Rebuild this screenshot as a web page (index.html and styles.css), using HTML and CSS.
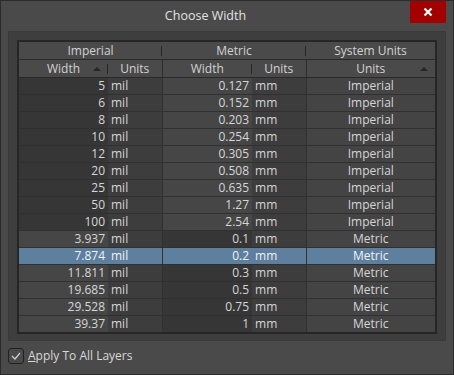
FILE: index.html
```html
<!DOCTYPE html>
<html lang="en">
<head>
    <meta charset="UTF-8">
    <title>Choose Width</title>
    <link rel="stylesheet" href="styles.css">
</head>
<body>
    <div class="window">
        <div class="titlebar">
            <div class="title">Choose Width</div>
            <div class="close">
                <svg width="10" height="10" viewBox="0 0 10 10"><path d="M1.5 1.5 L8.5 8.5 M8.5 1.5 L1.5 8.5" stroke="#fff" stroke-width="2.2"/></svg>
            </div>
        </div>

        <div class="panel">
            <table class="grid">
                <colgroup>
                    <col class="c-w"><col class="c-u"><col class="c-w"><col class="c-u"><col>
                </colgroup>
                <thead>
                    <tr class="band">
                        <th colspan="2"><span class="sep">Imperial</span></th>
                        <th colspan="2"><span class="sep">Metric</span></th>
                        <th>System Units</th>
                    </tr>
                    <tr class="cols">
                        <th class="sorted split">Width<i class="arrow"></i></th>
                        <th class="full">Units</th>
                        <th class="split">Width</th>
                        <th class="full">Units</th>
                        <th class="sorted">Units<i class="arrow"></i></th>
                    </tr>
                </thead>
                <tbody>
                    <tr class="imp"><td>5</td><td>mil</td><td>0.127</td><td>mm</td><td>Imperial</td></tr>
                    <tr class="imp"><td>6</td><td>mil</td><td>0.152</td><td>mm</td><td>Imperial</td></tr>
                    <tr class="imp"><td>8</td><td>mil</td><td>0.203</td><td>mm</td><td>Imperial</td></tr>
                    <tr class="imp"><td>10</td><td>mil</td><td>0.254</td><td>mm</td><td>Imperial</td></tr>
                    <tr class="imp"><td>12</td><td>mil</td><td>0.305</td><td>mm</td><td>Imperial</td></tr>
                    <tr class="imp"><td>20</td><td>mil</td><td>0.508</td><td>mm</td><td>Imperial</td></tr>
                    <tr class="imp"><td>25</td><td>mil</td><td>0.635</td><td>mm</td><td>Imperial</td></tr>
                    <tr class="imp"><td>50</td><td>mil</td><td>1.27</td><td>mm</td><td>Imperial</td></tr>
                    <tr class="imp"><td>100</td><td>mil</td><td>2.54</td><td>mm</td><td>Imperial</td></tr>
                    <tr class="met"><td>3.937</td><td>mil</td><td>0.1</td><td>mm</td><td>Metric</td></tr>
                    <tr class="met selected"><td>7.874</td><td>mil</td><td>0.2</td><td>mm</td><td>Metric</td></tr>
                    <tr class="met"><td>11.811</td><td>mil</td><td>0.3</td><td>mm</td><td>Metric</td></tr>
                    <tr class="met"><td>19.685</td><td>mil</td><td>0.5</td><td>mm</td><td>Metric</td></tr>
                    <tr class="met"><td>29.528</td><td>mil</td><td>0.75</td><td>mm</td><td>Metric</td></tr>
                    <tr class="met"><td>39.37</td><td>mil</td><td>1</td><td>mm</td><td>Metric</td></tr>
                </tbody>
            </table>
        </div>

        <label class="check">
            <span class="box">
                <svg width="10" height="8" viewBox="0 0 10 8"><path d="M1 4 L4 7 L9 1" fill="none" stroke="#cfcfcf" stroke-width="1.2"/></svg>
            </span>
            <span><u>A</u>pply To All Layers</span>
        </label>
    </div>
</body>
</html>
```

FILE: styles.css
```css
body {
    margin: 0;
    background: #2b2b2b;
    font-family: "Open Sans", "Noto Sans", sans-serif;
    font-size: 12px;
    color: #d6d6d6;
}
.window {
    width: 454px;
    height: 375px;
    box-sizing: border-box;
    border: 1px solid #2b2b2b;
    background: #4a4a4a;
}
.titlebar {
    display: flex;
    height: 30px;
}
.title {
    flex: 1;
    text-align: center;
    line-height: 30px;
    font-size: 12.5px;
    color: #e2e2e2;
}
.close {
    width: 36px;
    height: 22px;
    margin-right: 7px;
    background: #a30000;
    display: flex;
    align-items: center;
    justify-content: center;
}
.panel {
    margin: 0 7px;
    padding: 8px 9px 8px 8px;
    height: 292px;
    border: 1px solid #3a3a3a;
    background: #3e3e3e;
}
.grid {
    width: 420px;
    border-collapse: collapse;
    table-layout: fixed;
    border: 2px solid #262626;
}
.c-w { width: 90px; }
.c-u { width: 54px; }
th {
    font-weight: normal;
    height: 17px;
    padding: 0;
    background: #4a4a4a;
    color: #d2d2d2;
    position: relative;
}
.band th {
    border-bottom: 1px solid #2a2a2a;
}
.band th + th::before,
.cols th.split + th::before {
    content: "";
    position: absolute;
    left: -1px;
    top: 4px;
    height: 10px;
    width: 1px;
    background: #262626;
}
.cols th {
    border-bottom: 1px solid #2a2a2a;
}
.cols th.full + th {
    border-left: 1px solid #2e2e2e;
}
.cols th.full {
    border-left: none;
}
.arrow {
    position: absolute;
    right: 7px;
    top: 7px;
    width: 0;
    height: 0;
    border-left: 4px solid transparent;
    border-right: 4px solid transparent;
    border-bottom: 4px solid #262626;
}
td {
    height: 16px;
    padding: 0 3px;
    border-bottom: 1px solid #303030;
    white-space: nowrap;
    line-height: 16px;
}
td:nth-child(1), td:nth-child(3) {
    text-align: right;
}
td:nth-child(2), td:nth-child(4) {
    background: #3d3d3d;
}
td:nth-child(2) {
    border-right: 1px solid #303030;
}
td:nth-child(4) {
    border-right: 1px solid #303030;
}
td:nth-child(5) {
    text-align: center;
    background: #444444;
}
.imp td:nth-child(1), .met td:nth-child(3) {
    background: #363636;
}
.imp td:nth-child(3), .met td:nth-child(1) {
    background: #464646;
}
tbody tr:last-child td {
    border-bottom: none;
}
.selected td, .selected td:nth-child(n) {
    background: #5f7f9f;
    color: #eef2f6;
}
.check {
    display: flex;
    align-items: center;
    gap: 4px;
    margin: 6px 0 0 7px;
    color: #d8d8d8;
}
.box {
    width: 14px;
    height: 14px;
    border: 1px solid #222;
    border-radius: 3px;
    background: #4a4a4a;
    display: flex;
    align-items: center;
    justify-content: center;
}
```
